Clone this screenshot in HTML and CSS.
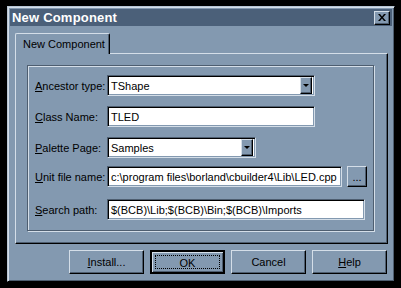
FILE: index.html
```html
<!DOCTYPE html>
<html lang="en">
<head>
    <meta charset="UTF-8">
    <title>New Component</title>
    <link rel="stylesheet" href="styles.css">
</head>
<body>
    <div class="dialog">
        <div class="titlebar">
            <span class="title">New Component</span>
            <button class="close" type="button">
                <svg width="8" height="7" viewBox="0 0 8 7"><path d="M0 0h2l2 2.5 2-2.5h2l-3 3.5 3 3.5h-2l-2-2.5-2 2.5h-2l3-3.5z" fill="#000"/></svg>
            </button>
        </div>

        <div class="tabs">
            <div class="tab">New Component</div>
        </div>
        <div class="panel">
            <div class="group">
                <div class="row row-1">
                    <label class="lbl"><u>A</u>ncestor type:</label>
                    <div class="field combo w-long">
                        <span class="val">TShape</span>
                        <span class="drop"><i></i></span>
                    </div>
                </div>
                <div class="row row-2">
                    <label class="lbl"><u>C</u>lass Name:</label>
                    <div class="field w-long"><span class="val">TLED</span></div>
                </div>
                <div class="row row-3">
                    <label class="lbl"><u>P</u>alette Page:</label>
                    <div class="field combo w-short">
                        <span class="val">Samples</span>
                        <span class="drop"><i></i></span>
                    </div>
                </div>
                <div class="row row-4">
                    <label class="lbl"><u>U</u>nit file name:</label>
                    <div class="field w-unit"><span class="val">c:\program files\borland\cbuilder4\Lib\LED.cpp</span></div>
                    <button class="btn btn-small" type="button">...</button>
                </div>
                <div class="row row-5">
                    <label class="lbl"><u>S</u>earch path:</label>
                    <div class="field w-full"><span class="val">$(BCB)\Lib;$(BCB)\Bin;$(BCB)\Imports</span></div>
                </div>
            </div>
        </div>

        <div class="buttons">
            <button class="btn" type="button"><u>I</u>nstall...</button>
            <button class="btn btn-default" type="button"><span class="focus">OK</span></button>
            <button class="btn" type="button">Cancel</button>
            <button class="btn" type="button"><u>H</u>elp</button>
        </div>
    </div>
</body>
</html>
```

FILE: styles.css
```css
html, body {
    margin: 0;
    background: #000;
}
body {
    padding: 6px 0 0 7px;
    font-family: "Liberation Sans", Arial, sans-serif;
    font-size: 11px;
    color: #000;
}
.dialog {
    width: 388px;
    height: 276px;
    box-sizing: border-box;
    background: #8399b0;
    border: 1px solid;
    border-color: #b8c6d4 #000 #000 #b8c6d4;
    box-shadow: inset 1px 1px 0 #d4dee8, inset -1px -1px 0 #4e5e70;
    padding: 2px;
}
.titlebar {
    height: 17px;
    background: #4b6079;
    display: flex;
    align-items: center;
    justify-content: space-between;
    padding: 0 2px 0 2px;
}
.title {
    color: #fff;
    font-weight: bold;
    font-size: 13px;
    letter-spacing: 0.2px;
}
.close {
    width: 16px;
    height: 14px;
    padding: 0;
    margin: 0;
    display: flex;
    align-items: center;
    justify-content: center;
    background: #8399b0;
    border: 1px solid;
    border-color: #d4dee8 #000 #000 #d4dee8;
    box-shadow: inset -1px -1px 0 #4e5e70;
}
.tabs {
    display: flex;
    margin: 7px 0 0 5px;
    position: relative;
    z-index: 1;
}
.tab {
    width: 95px;
    height: 21px;
    box-sizing: border-box;
    border: 1px solid;
    border-bottom: none;
    border-color: #d4dee8 #000 #000 #d4dee8;
    border-radius: 2px 2px 0 0;
    box-shadow: inset -1px 0 0 #4e5e70;
    background: #8399b0;
    padding: 4px 0 0 7px;
    white-space: nowrap;
    margin-bottom: -1px;
}
.panel {
    margin-left: 5px;
    width: 373px;
    height: 191px;
    box-sizing: border-box;
    border: 1px solid;
    border-color: #d4dee8 #000 #000 #d4dee8;
    box-shadow: inset -1px -1px 0 #4e5e70;
    padding: 11px 13px 12px 11px;
}
.group {
    height: 100%;
    box-sizing: border-box;
    border: 1px solid #4e5e70;
    box-shadow: 1px 1px 0 #d4dee8, inset 1px 1px 0 #d4dee8;
    padding: 9px 0 0 7px;
}
.row {
    display: flex;
    align-items: center;
    height: 21px;
}
.row-2 { margin-top: 10px; }
.row-3 { margin-top: 10px; }
.row-4 { margin-top: 8px; }
.row-5 { margin-top: 12px; }
.lbl {
    width: 72px;
    flex: none;
    white-space: nowrap;
}
.field {
    height: 21px;
    flex: none;
    box-sizing: border-box;
    background: #fff;
    border: 1px solid;
    border-color: #4e5e70 #d4dee8 #d4dee8 #4e5e70;
    box-shadow: inset 1px 1px 0 #000, inset -1px -1px 0 #8399b0;
    display: flex;
    align-items: center;
    padding: 0 2px 0 3px;
    white-space: nowrap;
    overflow: hidden;
}
.val {
    flex: 1;
}
.w-long { width: 208px; }
.w-short { width: 149px; }
.w-unit { width: 235px; }
.w-full { width: 258px; }
.combo {
    padding-right: 2px;
}
.drop {
    width: 12px;
    height: 17px;
    flex: none;
    box-sizing: border-box;
    background: #8399b0;
    border: 1px solid;
    border-color: #d4dee8 #000 #000 #d4dee8;
    box-shadow: inset -1px -1px 0 #4e5e70;
    display: flex;
    align-items: center;
    justify-content: center;
}
.drop i {
    width: 0;
    height: 0;
    border-left: 3px solid transparent;
    border-right: 3px solid transparent;
    border-top: 3px solid #000;
}
.buttons {
    display: flex;
    justify-content: flex-end;
    gap: 6px;
    margin: 6px 5px 0 0;
}
.btn {
    width: 75px;
    height: 24px;
    flex: none;
    box-sizing: border-box;
    background: #8399b0;
    border: 1px solid;
    border-color: #d4dee8 #000 #000 #d4dee8;
    box-shadow: inset -1px -1px 0 #4e5e70;
    font-family: "Liberation Sans", Arial, sans-serif;
    font-size: 11px;
    color: #000;
    padding: 0;
    margin: 0;
}
.btn-default {
    border: 2px solid #000;
    box-shadow: inset 1px 1px 0 #d4dee8, inset -1px -1px 0 #4e5e70;
    padding: 3px;
}
.focus {
    display: block;
    height: 100%;
    box-sizing: border-box;
    border: 1px dotted #000;
    line-height: 14px;
}
.btn-small {
    width: 20px;
    height: 21px;
    margin-left: 5px;
}
```
